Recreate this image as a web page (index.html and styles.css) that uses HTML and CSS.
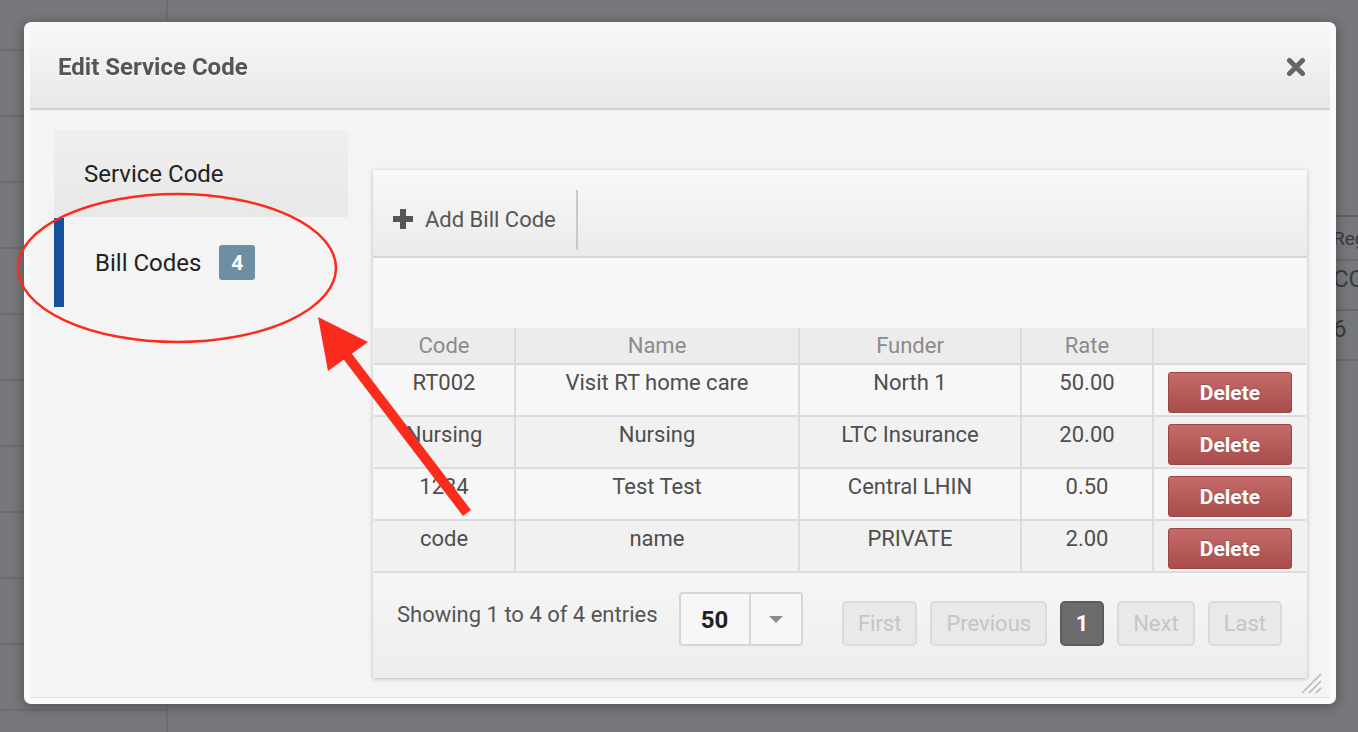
FILE: index.html
```html
<!DOCTYPE html>
<html lang="en">
<head>
    <meta charset="UTF-8">
    <meta name="viewport" content="width=device-width, initial-scale=1.0">
    <title>Edit Service Code</title>
    <link rel="stylesheet" href="styles.css">
</head>
<body>
    <!-- page behind the dialog -->
    <div class="backdrop">
        <div class="bg-side">
            <div class="bg-row"></div><div class="bg-row"></div><div class="bg-row"></div>
            <div class="bg-row"></div><div class="bg-row"></div><div class="bg-row"></div>
            <div class="bg-row"></div><div class="bg-row"></div><div class="bg-row"></div>
            <div class="bg-row"></div><div class="bg-row"></div>
        </div>
        <div class="bg-main">
            <div class="bg-col">
                <div class="bg-cell bg-head">Reg</div>
                <div class="bg-cell">CC</div>
                <div class="bg-cell">6</div>
            </div>
        </div>
    </div>

    <div class="modal">
        <div class="modal-header">
            <h2>Edit Service Code</h2>
            <button type="button" class="close-btn" aria-label="Close">
                <svg width="20" height="20" viewBox="0 0 20 20"><path d="M3.5 3.5 L16.5 16.5 M16.5 3.5 L3.5 16.5" stroke="#666" stroke-width="5" stroke-linecap="round"/></svg>
            </button>
        </div>
        <div class="modal-body">
            <ul class="side-nav">
                <li class="nav-item">Service Code</li>
                <li class="nav-item active">Bill Codes <span class="badge">4</span></li>
            </ul>

            <div class="panel">
                <div class="toolbar">
                    <button type="button" class="add-btn">
                        <svg width="22" height="22" viewBox="0 0 22 22"><path d="M11 1 V21 M1 11 H21" stroke="#555" stroke-width="6"/></svg>
                        Add Bill Code
                    </button>
                </div>
                <div class="panel-spacer"></div>
                <table class="bill-table">
                    <colgroup>
                        <col style="width:141px"><col style="width:284px"><col style="width:222px"><col style="width:132px"><col>
                    </colgroup>
                    <thead>
                        <tr><th>Code</th><th>Name</th><th>Funder</th><th>Rate</th><th></th></tr>
                    </thead>
                    <tbody>
                        <tr><td>RT002</td><td>Visit RT home care</td><td>North 1</td><td>50.00</td><td class="act"><button type="button" class="delete-btn">Delete</button></td></tr>
                        <tr><td>Nursing</td><td>Nursing</td><td>LTC Insurance</td><td>20.00</td><td class="act"><button type="button" class="delete-btn">Delete</button></td></tr>
                        <tr><td>1234</td><td>Test Test</td><td>Central LHIN</td><td>0.50</td><td class="act"><button type="button" class="delete-btn">Delete</button></td></tr>
                        <tr><td>code</td><td>name</td><td>PRIVATE</td><td>2.00</td><td class="act"><button type="button" class="delete-btn">Delete</button></td></tr>
                    </tbody>
                </table>
                <div class="panel-footer">
                    <div class="footer-left">
                        <span class="info">Showing 1 to 4 of 4 entries</span>
                        <div class="page-size">
                            <span class="size-value">50</span>
                            <span class="size-caret"></span>
                        </div>
                    </div>
                    <div class="pager">
                        <button type="button" class="page-btn" disabled>First</button>
                        <button type="button" class="page-btn" disabled>Previous</button>
                        <button type="button" class="page-btn current">1</button>
                        <button type="button" class="page-btn" disabled>Next</button>
                        <button type="button" class="page-btn" disabled>Last</button>
                    </div>
                </div>
            </div>
        </div>
        <svg class="resize-grip" width="22" height="22" viewBox="0 0 22 22">
            <path d="M2 21 L21 2 M9 21 L21 9 M16 21 L21 16" stroke="#b9b9b9" stroke-width="1.6"/>
        </svg>
    </div>

    <!-- screenshot markup -->
    <svg class="annotations" width="1358" height="732" viewBox="0 0 1358 732">
        <ellipse cx="177" cy="268" rx="159" ry="74" fill="none" stroke="#fd2a1d" stroke-width="2.5"/>
        <line x1="467" y1="513" x2="345" y2="353" stroke="#fb2b1d" stroke-width="10"/>
        <polygon points="318,317 368,342 328,371" fill="#fb2b1d"/>
    </svg>
</body>
</html>
```

FILE: styles.css
```css
* { box-sizing: border-box; }
html, body { margin: 0; height: 100%; }
body {
    font-family: Roboto, "Liberation Sans", sans-serif;
    background: #76787c;
    overflow: hidden;
}

/* backdrop page */
.backdrop { display: flex; height: 100%; }
.bg-side {
    width: 168px;
    margin-top: -15px;
    border-right: 2px solid rgba(0, 0, 0, 0.08);
}
.bg-row { height: 66px; border-bottom: 2px solid rgba(0, 0, 0, 0.09); }
.bg-main { flex: 1; display: flex; justify-content: flex-end; }
.bg-col {
    width: 28px;
    margin-top: 215px;
    white-space: nowrap;
    border-top: 2px solid rgba(0, 0, 0, 0.18);
    font-size: 24px;
    color: #3a3b3e;
}
.bg-cell { height: 50px; padding: 4px 0 0 3px; border-bottom: 2px solid rgba(0, 0, 0, 0.12); }
.bg-head { height: 44px; font-size: 19px; padding-top: 10px; }

/* dialog */
.modal {
    position: fixed;
    left: 24px;
    top: 22px;
    width: 1312px;
    height: 682px;
    background: #fafafa;
    border-radius: 7px;
    padding: 1px 6px 6px;
    box-shadow: 0 2px 14px rgba(0, 0, 0, 0.35);
    display: flex;
    flex-direction: column;
}
.modal-header {
    flex: none;
    height: 87px;
    display: flex;
    align-items: center;
    justify-content: space-between;
    padding: 3px 24px 0 28px;
    background: linear-gradient(#f8f8f8, #e8e8e8);
    border-bottom: 2px solid #d2d2d2;
    border-radius: 6px 6px 0 0;
}
.modal-header h2 {
    margin: 0;
    font-size: 24px;
    font-weight: 700;
    color: #555;
    text-shadow: 0 1px 0 #fff;
}
.close-btn {
    border: none;
    background: none;
    padding: 0;
    width: 20px;
    height: 20px;
    cursor: pointer;
}
.modal-body {
    flex: 1;
    display: flex;
    align-items: flex-start;
    gap: 25px;
    padding: 20px 23px 0 24px;
    background: #f4f4f4;
    border-bottom: 1px solid #e0e0e0;
}

.side-nav { list-style: none; margin: 0; padding: 0; width: 294px; }
.nav-item {
    height: 87px;
    display: flex;
    align-items: center;
    padding-left: 30px;
    font-size: 24px;
    color: #222;
    background: linear-gradient(#efefef, #e8e8e8);
}
.nav-item.active {
    height: 89px;
    margin-top: 1px;
    padding-left: 31px;
    background: none;
    border-left: 10px solid #15509c;
}
.badge {
    margin-left: 18px;
    width: 36px;
    height: 35px;
    display: flex;
    align-items: center;
    justify-content: center;
    background: #6e8ea3;
    color: #fff;
    font-weight: 700;
    font-size: 21px;
    border-radius: 3px;
}

.panel {
    width: 934px;
    height: 508px;
    margin-top: 40px;
    background: #f8f8f8;
    box-shadow: 0 1px 4px rgba(0, 0, 0, 0.25);
    display: flex;
    flex-direction: column;
}
.toolbar {
    height: 88px;
    padding-top: 20px;
    background: linear-gradient(#f8f8f8, #ebebeb);
    border-bottom: 2px solid #d6d6d6;
}
.add-btn {
    height: 60px;
    display: flex;
    align-items: center;
    gap: 11px;
    padding: 0 20px 2px 19px;
    border: none;
    border-right: 2px solid #c9c9c9;
    background: transparent;
    font-family: inherit;
    font-size: 22px;
    color: #555;
    cursor: pointer;
}
.panel-spacer { height: 70px; flex: none; }

.bill-table {
    width: 932px;
    margin: 0 1px;
    border-collapse: collapse;
    table-layout: fixed;
    font-size: 22px;
}
.bill-table th {
    height: 36px;
    background: #ececec;
    font-weight: 400;
    color: #8b8b8b;
    border: 2px solid #dcdcdc;
    border-top: none;
    padding: 0;
}
.bill-table td {
    height: 52px;
    padding: 5px 4px 0;
    vertical-align: top;
    text-align: center;
    line-height: 26px;
    color: #4e4e4e;
    border: 2px solid #dcdcdc;
}
.bill-table th:first-child, .bill-table td:first-child { border-left: none; }
.bill-table th:last-child, .bill-table td:last-child { border-right: none; }
.bill-table tbody tr:nth-child(odd) { background: #f7f7f7; }
.bill-table tbody tr:nth-child(even) { background: #f1f1f1; }
.bill-table td.act { padding-top: 7px; }
.delete-btn {
    width: 124px;
    height: 41px;
    border: 1px solid #9d4545;
    border-radius: 3px;
    background: linear-gradient(#c56b6a, #a84c4c);
    color: #fff;
    font-family: inherit;
    font-weight: 700;
    font-size: 21px;
    text-shadow: 0 -1px 0 rgba(0, 0, 0, 0.2);
    cursor: pointer;
}

.panel-footer {
    flex: 1;
    display: flex;
    justify-content: space-between;
    align-items: flex-start;
    padding: 19px 25px 0 24px;
    background: linear-gradient(#f6f6f6, #ededed);
}
.footer-left { display: flex; align-items: flex-start; gap: 21px; }
.info { font-size: 22px; color: #555; line-height: 26px; margin-top: 10px; }
.page-size {
    display: flex;
    width: 124px;
    height: 54px;
    border: 2px solid #d6d6d6;
    border-radius: 4px;
    background: #f7f7f7;
}
.size-value {
    width: 70px;
    display: flex;
    align-items: center;
    justify-content: center;
    border-right: 2px solid #d6d6d6;
    font-size: 24px;
    font-weight: 700;
    color: #222;
    padding-top: 2px;
}
.size-caret { flex: 1; display: flex; align-items: center; justify-content: center; }
.size-caret::after {
    content: "";
    border-left: 7px solid transparent;
    border-right: 7px solid transparent;
    border-top: 7px solid #8c8c8c;
}
.pager { display: flex; gap: 13px; margin-top: 9px; }
.page-btn {
    height: 45px;
    min-width: 44px;
    padding: 0 14px;
    border: 2px solid #dadada;
    border-radius: 5px;
    background: #e9e9e9;
    color: #c5c5c5;
    font-family: inherit;
    font-size: 22px;
}
.page-btn.current {
    background: #6b6b6b;
    border-color: #5c5c5c;
    color: #fff;
    font-weight: 700;
    padding: 0;
    width: 44px;
}

.resize-grip { position: absolute; right: 14px; bottom: 10px; }

.annotations { position: fixed; left: 0; top: 0; pointer-events: none; }
```
